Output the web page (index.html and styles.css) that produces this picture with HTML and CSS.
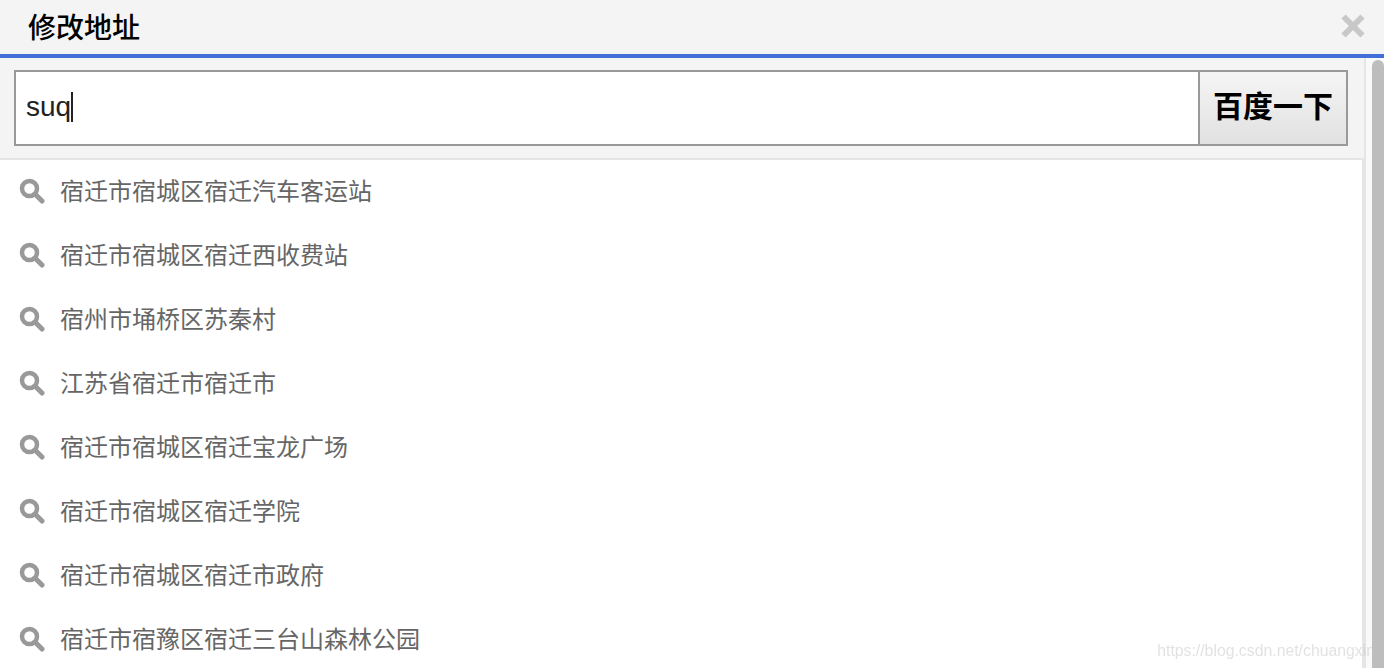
FILE: index.html
```html
<!DOCTYPE html>
<html lang="zh-CN">
<head>
  <meta charset="UTF-8">
  <title>修改地址</title>
  <link rel="stylesheet" href="styles.css">
</head>
<body>
<div class="header">
  <div class="title">修改地址</div>
  <svg class="close" width="24" height="24" viewBox="0 0 24 24"><path d="M2.5 2.5 L21.5 21.5 M21.5 2.5 L2.5 21.5"/></svg>
</div>
<div class="main">
  <div class="content">
    <div class="search-area">
      <div class="search-box">
        <div class="search-input"><span>suq</span><i class="caret"></i></div>
        <div class="search-btn">百度一下</div>
      </div>
    </div>
    <ul class="results">
      <li><svg class="icon" width="26" height="26" viewBox="0 0 26 26"><circle cx="10.5" cy="10.5" r="7.5"/><path d="M16 16 L23 23"/></svg>宿迁市宿城区宿迁汽车客运站</li>
      <li><svg class="icon" width="26" height="26" viewBox="0 0 26 26"><circle cx="10.5" cy="10.5" r="7.5"/><path d="M16 16 L23 23"/></svg>宿迁市宿城区宿迁西收费站</li>
      <li><svg class="icon" width="26" height="26" viewBox="0 0 26 26"><circle cx="10.5" cy="10.5" r="7.5"/><path d="M16 16 L23 23"/></svg>宿州市埇桥区苏秦村</li>
      <li><svg class="icon" width="26" height="26" viewBox="0 0 26 26"><circle cx="10.5" cy="10.5" r="7.5"/><path d="M16 16 L23 23"/></svg>江苏省宿迁市宿迁市</li>
      <li><svg class="icon" width="26" height="26" viewBox="0 0 26 26"><circle cx="10.5" cy="10.5" r="7.5"/><path d="M16 16 L23 23"/></svg>宿迁市宿城区宿迁宝龙广场</li>
      <li><svg class="icon" width="26" height="26" viewBox="0 0 26 26"><circle cx="10.5" cy="10.5" r="7.5"/><path d="M16 16 L23 23"/></svg>宿迁市宿城区宿迁学院</li>
      <li><svg class="icon" width="26" height="26" viewBox="0 0 26 26"><circle cx="10.5" cy="10.5" r="7.5"/><path d="M16 16 L23 23"/></svg>宿迁市宿城区宿迁市政府</li>
      <li><svg class="icon" width="26" height="26" viewBox="0 0 26 26"><circle cx="10.5" cy="10.5" r="7.5"/><path d="M16 16 L23 23"/></svg>宿迁市宿豫区宿迁三台山森林公园</li>
    </ul>
  </div>
  <div class="scrollbar"><div class="thumb"></div></div>
</div>
<div class="watermark">https://blog.csdn.net/chuangxin</div>
</body>
</html>
```

FILE: styles.css
```css
* {
  margin: 0;
  padding: 0;
  box-sizing: border-box;
}

html, body {
  height: 668px;
  overflow: hidden;
}

body {
  position: relative;
  display: flex;
  flex-direction: column;
  background: #fff;
  font-family: "Liberation Sans", "Noto Sans CJK SC", sans-serif;
}

.header {
  display: flex;
  justify-content: space-between;
  align-items: center;
  height: 58px;
  padding: 0 19px 2px 28px;
  background: #f4f4f4;
  border-bottom: 4px solid #4070d8;
}

.title {
  font-size: 28px;
  font-weight: 500;
  color: #000;
}

.close path {
  fill: none;
  stroke: #c8c8c8;
  stroke-width: 6;
}

.main {
  flex: 1;
  display: flex;
  min-height: 0;
}

.content {
  width: 1366px;
  border-right: 2px solid #e5e5e5;
  overflow: hidden;
}

.search-area {
  height: 102px;
  padding: 12px 14px 0 14px;
  background: #f4f4f4;
  border-bottom: 2px solid #e5e5e5;
}

.search-box {
  display: flex;
  width: 1334px;
  height: 76px;
  border: 2px solid #999;
}

.search-input {
  flex: 1;
  display: flex;
  align-items: center;
  padding: 0 0 2px 10px;
  background: #fff;
  font-size: 28px;
  color: #222;
}

.caret {
  width: 2px;
  height: 30px;
  background: #222;
}

.search-btn {
  display: flex;
  justify-content: center;
  align-items: center;
  width: 148px;
  padding-bottom: 8px;
  border-left: 2px solid #999;
  background: linear-gradient(to bottom, #f5f5f5, #e1e1e1);
  font-size: 30px;
  font-weight: 700;
  color: #000;
}

.results {
  list-style: none;
  background: #fff;
  border-right: 2px solid #e5e5e5;
}

.results li {
  display: flex;
  align-items: center;
  height: 64px;
  padding: 0 0 6px 19px;
  font-size: 24px;
  color: #666;
}

.icon {
  margin: 4px 15px 0 0;
  filter: blur(0.5px);
}

.icon circle, .icon path {
  fill: none;
  stroke: #999;
}

.icon circle {
  stroke-width: 4.5;
}

.icon path {
  stroke-width: 5;
  stroke-linecap: round;
}

.scrollbar {
  flex: 1;
  padding: 2px 0 0 6px;
  background: #f9f9f9;
}

.thumb {
  height: 100%;
  background: #bdbdbd;
  border-radius: 6px 6px 0 0;
}

.watermark {
  position: absolute;
  right: 9px;
  bottom: 8px;
  font-size: 15.8px;
  color: rgba(190, 190, 190, 0.45);
  filter: blur(0.4px);
}
```
